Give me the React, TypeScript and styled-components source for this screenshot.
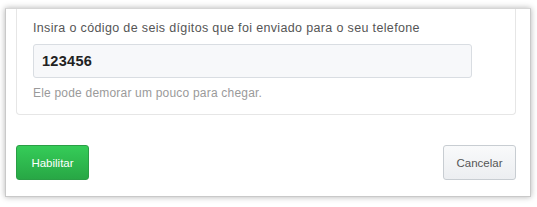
import styled, { createGlobalStyle } from "styled-components";

const GlobalStyle = createGlobalStyle`
  * {
    box-sizing: border-box;
  }
  body {
    margin: 0;
    background: #ffffff;
    font-family: "Liberation Sans", Arial, sans-serif;
  }
`;

export default function App() {
  return (
    <>
      <GlobalStyle />
      <Page>
        <Modal>
          <Panel>
            <Label>Insira o código de seis dígitos que foi enviado para o seu telefone</Label>
            <CodeInput defaultValue="123456" />
            <Hint>Ele pode demorar um pouco para chegar.</Hint>
          </Panel>
          <Footer>
            <Button variant="primary">Habilitar</Button>
            <Button variant="default">Cancelar</Button>
          </Footer>
        </Modal>
      </Page>
    </>
  );
}

const Page = styled.div`
  display: flex;
  flex-direction: column;
  width: 537px;
  height: 207px;
  padding: 8px 6px 0 5px;
  overflow: hidden;
`;

const Modal = styled.div`
  display: flex;
  flex-direction: column;
  height: 189px;
  padding: 0 14px 0 10px;
  background: #ffffff;
  border: 1px solid #c9c9c9;
  border-top-color: #d6d6d6;
  box-shadow: 0 0 6px rgba(0, 0, 0, 0.3);
`;

const Panel = styled.div`
  display: flex;
  flex-direction: column;
  height: 106px;
  padding: 11px 16px 0 16px;
  border: 1px solid #e6e6e6;
  border-top: none;
  border-radius: 0 0 4px 4px;
`;

const Label = styled.div`
  font-size: 12.5px;
  line-height: 16px;
  color: #555555;
  letter-spacing: 0.35px;
`;

const CodeInput = styled.input`
  margin-top: 8px;
  width: 439px;
  height: 34px;
  padding: 0 8px;
  background: #f7f8fa;
  border: 1px solid #d9dde2;
  border-radius: 3px;
  font-family: "Liberation Sans", Arial, sans-serif;
  font-size: 14.5px;
  font-weight: 700;
  color: #222222;
  letter-spacing: 0.3px;
  outline: none;
`;

const Hint = styled.div`
  margin-top: 7px;
  font-size: 12px;
  line-height: 16px;
  color: #9a9a9a;
  letter-spacing: 0.2px;
`;

const Footer = styled.div`
  display: flex;
  justify-content: space-between;
  align-items: center;
  margin-top: 30px;
`;

const Button = styled.button<{ variant: "primary" | "default" }>`
  width: 73px;
  height: 35px;
  border-radius: 3px;
  font-family: "Liberation Sans", Arial, sans-serif;
  font-size: 11.5px;
  cursor: pointer;
  border: 1px solid
    ${(p) => (p.variant === "primary" ? "#2a9e45" : "#c8cdd2")};
  background: ${(p) =>
    p.variant === "primary"
      ? "linear-gradient(#35cc58, #28a745)"
      : "linear-gradient(#f9fafb, #eceef1)"};
  color: ${(p) => (p.variant === "primary" ? "#ffffff" : "#555555")};
`;
